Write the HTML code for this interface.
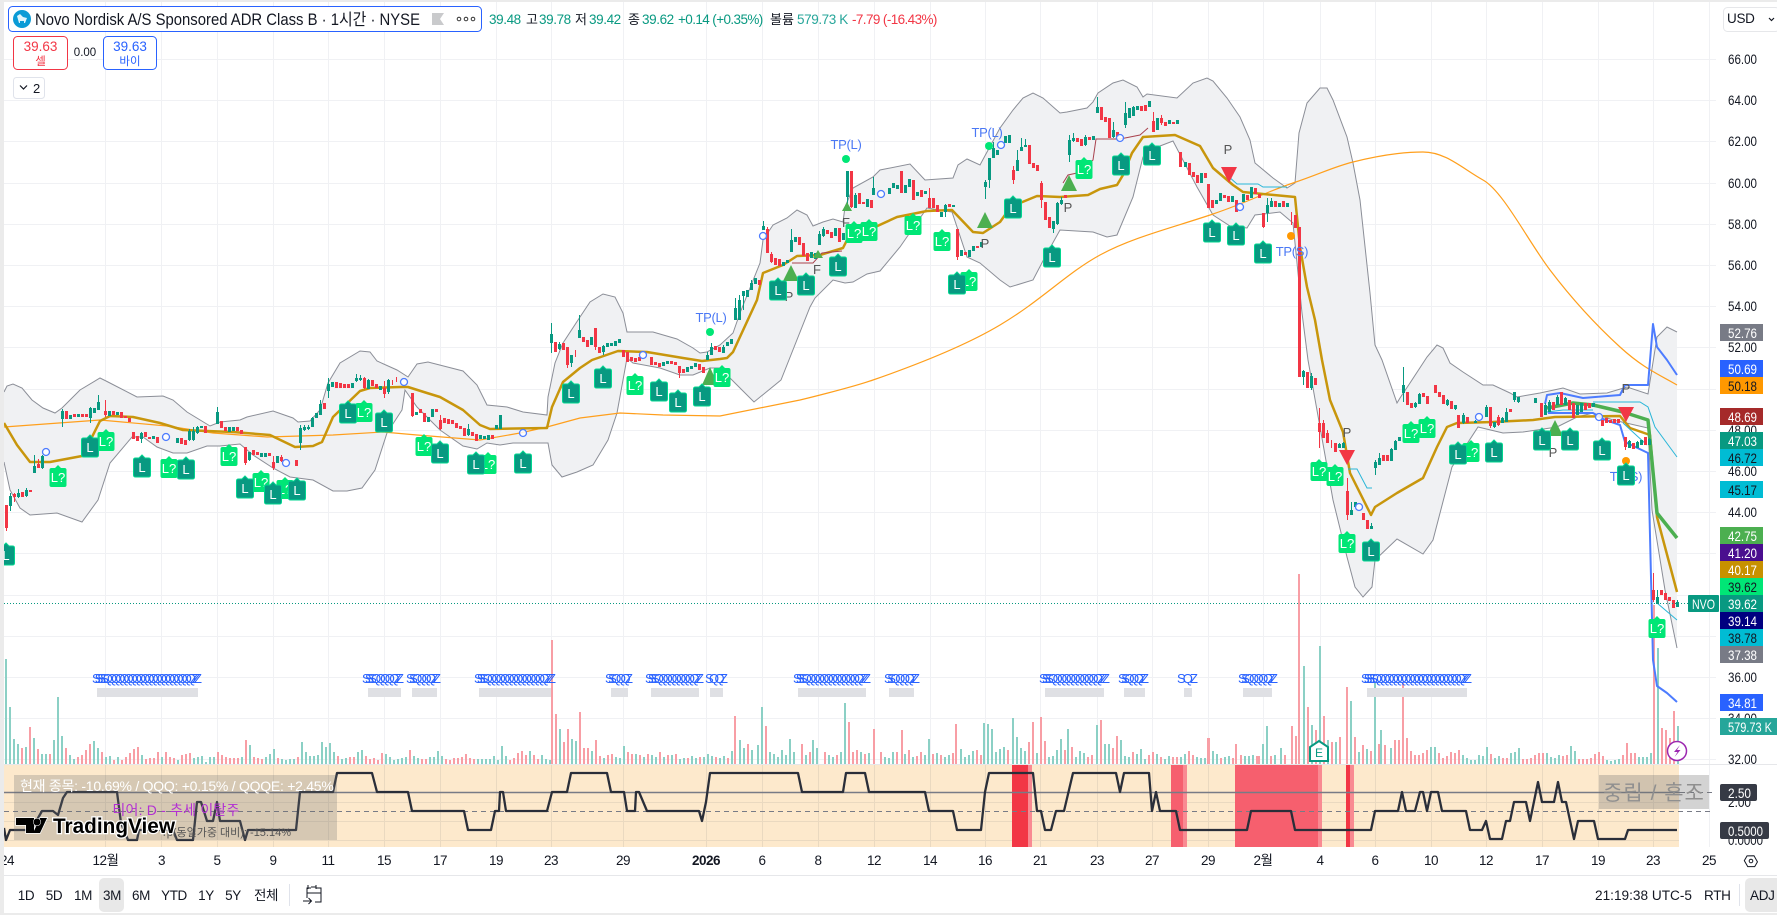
<!DOCTYPE html>
<html lang="ko"><head><meta charset="utf-8"><title>NVO</title>
<style>
html,body{margin:0;padding:0;background:#fff;width:1777px;height:915px;overflow:hidden}
svg{display:block}
text{font-family:"Liberation Sans","Noto Sans CJK KR",sans-serif;font-size:13px;fill:#131722}
.ax{font-size:14px;fill:#131722}
.tm{font-size:13.500px;text-anchor:middle;letter-spacing:-.5px}
.lb{font-size:14px;text-anchor:middle}
.w{fill:#fff}
.g{fill:#089981}
.r{fill:#f23645}
.m{font-size:13px;fill:#fff;text-anchor:middle}
.tp{font-size:13px;fill:#4a78f5;text-anchor:middle;letter-spacing:-.3px}
.pf{font-size:13px;fill:#555;text-anchor:middle}
.sq{font-size:13px;fill:#2962ff}
.bt{font-size:13.500px;text-anchor:middle;letter-spacing:-.4px}
</style></head><body>
<svg width="1777" height="915" viewBox="0 0 1777 915" xmlns="http://www.w3.org/2000/svg">
<defs>
<path id="t" d="M-8.5 5Q-8.5 3-6.500 3H-3L0 0L3 3H6.500Q8.500 3 8.500 5V20Q8.500 22 6.500 22H-6.500Q-8.500 22-8.500 20Z"/>
<clipPath id="pc"><rect x="4" y="2" width="1712" height="762"/></clipPath>
</defs>
<rect width="1777" height="915" fill="#fff"/>

<!-- grid -->
<path stroke="#f0f1f4" stroke-width="1" fill="none" d="M4 59.500H1716M4 100.500H1716M4 141.500H1716M4 183.500H1716M4 224.500H1716M4 265.500H1716M4 306.500H1716M4 347.500H1716M4 389.500H1716M4 430.500H1716M4 471.500H1716M4 512.500H1716M4 553.500H1716M4 595.500H1716M4 636.500H1716M4 677.500H1716M4 718.500H1716M4 759.500H1716M105.500 2V847M161.500 2V847M217.500 2V847M273.500 2V847M328.500 2V847M384.500 2V847M440.500 2V847M496.500 2V847M551.500 2V847M623.500 2V847M706.500 2V847M762.500 2V847M818.500 2V847M874.500 2V847M930.500 2V847M985.500 2V847M1040.500 2V847M1097.500 2V847M1152.500 2V847M1208.500 2V847M1263.500 2V847M1320.500 2V847M1375.500 2V847M1431.500 2V847M1486.500 2V847M1542.500 2V847M1598.500 2V847M1653.500 2V847M1709.500 2V847"/>

<!-- volume -->
<g fill="none" stroke-width="2">
<path stroke="#8bd0c5" d="M6 659V764M10 707V764M14 739V764M18 744V764M26 747V764M34 738V764M42 754V764M46 754V764M54 740V764M58 697V764M62 736V764M70 755V764M74 759V764M94 741V764M98 748V764M106 757V764M110 756V764M118 757V764M142 755V764M162 757V764M178 760V764M194 758V764M198 757V764M202 756V764M206 762V764M210 757V764M214 757V764M242 757V764M250 745V764M266 757V764M270 754V764M274 749V764M282 759V764M286 760V764M290 759V764M294 759V764M302 742V764M306 752V764M310 756V764M314 756V764M318 755V764M322 742V764M326 747V764M330 743V764M334 752V764M342 759V764M346 758V764M358 752V764M362 750V764M386 754V764M390 757V764M394 760V764M398 759V764M402 758V764M406 757V764M414 756V764M418 758V764M430 757V764M434 757V764M438 751V764M442 756V764M478 759V764M482 759V764M486 759V764M490 759V764M494 756V764M498 760V764M502 746V764M506 756V764M530 751V764M542 755V764M546 759V764M550 760V764M560 729V764M572 739V764M576 741V764M592 751V764M604 758V764M616 757V764M620 758V764M624 746V764M636 754V764M644 757V764M652 755V764M656 757V764M664 757V764M672 755V764M680 759V764M684 758V764M692 756V764M696 758V764M704 757V764M708 754V764M712 756V764M720 758V764M724 756V764M732 751V764M740 740V764M744 748V764M752 750V764M758 745V764M762 707V764M770 752V764M774 754V764M778 757V764M782 750V764M786 755V764M790 739V764M794 752V764M806 755V764M813 740V764M817 748V764M829 755V764M833 757V764M841 752V764M845 703V764M861 752V764M869 753V764M885 757V764M889 758V764M893 752V764M905 754V764M913 757V764M925 755V764M929 739V764M937 753V764M945 757V764M949 755V764M961 749V764M965 757V764M969 755V764M973 751V764M984 723V764M988 724V764M992 729V764M996 752V764M1000 749V764M1004 747V764M1013 718V764M1017 737V764M1021 748V764M1025 751V764M1037 753V764M1049 757V764M1053 756V764M1057 750V764M1061 739V764M1068 729V764M1076 757V764M1080 751V764M1084 753V764M1097 725V764M1105 744V764M1109 744V764M1121 740V764M1125 756V764M1129 757V764M1137 754V764M1141 749V764M1145 759V764M1157 754V764M1165 759V764M1169 756V764M1181 757V764M1185 754V764M1197 757V764M1201 758V764M1205 758V764M1213 751V764M1217 754V764M1225 757V764M1229 756V764M1245 756V764M1249 756V764M1253 755V764M1263 744V764M1267 726V764M1275 755V764M1281 748V764M1304 666V764M1312 725V764M1320 646V764M1328 740V764M1336 742V764M1351 701V764M1359 752V764M1367 749V764M1375 683V764M1381 730V764M1391 748V764M1431 747V764M1435 747V764M1463 755V764M1467 758V764M1471 760V764M1475 760V764M1479 755V764M1483 756V764M1487 747V764M1495 758V764M1499 756V764M1511 753V764M1515 752V764M1519 748V764M1547 753V764M1551 757V764M1555 758V764M1559 755V764M1571 746V764M1575 751V764M1607 760V764M1611 761V764M1615 760V764M1619 759V764M1639 757V764M1643 757V764M1647 757V764M1651 753V764M1658 648V764M1678 726V764"/>
<path stroke="#f89ea5" d="M22 748V764M30 727V764M38 749V764M50 754V764M66 748V764M78 757V764M82 755V764M86 750V764M90 744V764M102 752V764M114 760V764M122 760V764M126 757V764M130 753V764M134 749V764M138 747V764M146 759V764M150 758V764M154 758V764M158 752V764M166 752V764M170 757V764M174 758V764M182 755V764M186 754V764M190 753V764M218 752V764M222 755V764M226 757V764M230 758V764M234 758V764M238 758V764M246 740V764M254 757V764M258 758V764M262 759V764M278 758V764M298 757V764M338 756V764M350 757V764M354 757V764M366 756V764M370 759V764M374 758V764M378 760V764M382 753V764M410 750V764M422 759V764M426 759V764M446 759V764M450 760V764M454 758V764M458 758V764M462 757V764M466 754V764M470 758V764M474 759V764M510 760V764M514 758V764M518 753V764M522 751V764M526 755V764M534 755V764M538 759V764M552 640V764M556 714V764M564 742V764M568 729V764M580 712V764M584 748V764M588 748V764M596 740V764M600 756V764M608 755V764M612 754V764M628 752V764M632 754V764M640 755V764M648 754V764M660 752V764M668 755V764M676 754V764M688 758V764M700 757V764M716 757V764M728 758V764M735 716V764M748 744V764M766 726V764M802 744V764M810 752V764M825 752V764M837 755V764M849 722V764M853 752V764M857 750V764M865 754V764M874 729V764M881 752V764M897 752V764M902 730V764M909 750V764M917 756V764M921 752V764M933 754V764M941 755V764M953 753V764M956 724V764M977 750V764M981 755V764M1008 750V764M1029 742V764M1033 722V764M1041 717V764M1045 741V764M1065 750V764M1072 747V764M1088 757V764M1092 755V764M1101 720V764M1113 748V764M1117 736V764M1133 752V764M1149 755V764M1153 752V764M1161 757V764M1173 757V764M1177 757V764M1189 751V764M1193 755V764M1208 738V764M1209 738V764M1221 758V764M1233 758V764M1236 744V764M1241 755V764M1257 756V764M1259 756V764M1271 756V764M1285 755V764M1292 726V764M1296 736V764M1299 574V764M1308 707V764M1316 730V764M1324 716V764M1332 742V764M1340 737V764M1347 687V764M1355 737V764M1363 745V764M1371 751V764M1379 744V764M1385 745V764M1395 740V764M1399 740V764M1403 683V764M1407 738V764M1411 751V764M1415 755V764M1419 755V764M1423 753V764M1427 750V764M1439 753V764M1443 758V764M1447 756V764M1451 752V764M1455 753V764M1459 750V764M1491 754V764M1503 758V764M1507 758V764M1523 759V764M1527 759V764M1531 758V764M1535 755V764M1539 753V764M1543 753V764M1563 756V764M1567 755V764M1579 759V764M1583 759V764M1587 759V764M1591 758V764M1595 754V764M1599 752V764M1603 756V764M1623 755V764M1627 743V764M1631 753V764M1635 753V764M1654 605V764M1662 728V764M1666 730V764M1670 738V764M1674 711V764"/>
</g>

<!-- bollinger -->
<path fill="#f0f1f3" d="M4 392 7 386 13 384 22 388 32 400 43 408 55 413 62 408 80 390 100 378 108 382 137 397 163 396 173 400 187 412 210 426 220 422 240 420 247 417 273 411 293 418 298 422 310 421 320 410 328 383 340 363 360 351 370 352 377 361 397 370 408 377 417 364 428 362 463 371 477 385 487 405 507 407 523 412 547 415 548 397 555 363 563 343 580 317 590 302 603 294 615 297 623 313 627 332 653 332 677 339 693 348 700 353 707 352 720 345 733 333 740 313 760 263 763 240 773 225 787 218 797 210 807 215 813 226 823 222 833 219 843 222 845 207 853 188 873 177 880 170 910 164 925 180 953 178 958 165 967 159 980 165 1000 128 1013 110 1023 98 1033 93 1043 98 1060 113 1067 112 1087 108 1093 102 1098 93 1113 83 1123 80 1137 87 1143 97 1147 94 1177 98 1193 83 1207 78 1213 81 1227 98 1240 117 1250 140 1255 163 1273 178 1287 188 1295 183 1299 133 1307 103 1320 88 1327 88 1333 100 1347 137 1353 163 1360 200 1370 293 1375 345 1382 360 1397 403 1400 398 1410 383 1427 357 1437 345 1443 348 1450 363 1463 372 1483 385 1493 385 1510 393 1517 397 1540 393 1563 388 1580 394 1607 393 1627 387 1648 394 1657 337 1667 327 1677 332V648L1665 590 1652 510 1648 428 1613 420 1593 413 1577 417 1557 427 1523 432 1503 433 1478 427 1452 467 1433 540 1423 554 1397 539 1375 560 1372 587 1363 597 1355 587 1347 557 1333 500 1320 427 1308 360 1302 313 1293 223 1280 212 1255 215 1247 228 1230 226 1213 215 1197 187 1173 141 1160 146 1143 157 1133 197 1117 235 1107 237 1093 232 1060 230 1045 257 1033 280 1010 287 1000 280 980 263 967 257 952 212 927 208 900 247 880 271 867 274 853 282 845 283 833 280 815 298 810 307 781 380 754 402 737 385 720 368 710 368 693 375 680 375 660 368 633 363 627 358 617 413 608 440 593 465 577 472 562 477 552 465 548 443 513 443 500 445 487 443 477 449 463 446 440 430 417 407 405 390 402 410 387 433 375 470 362 488 347 491 333 491 313 480 290 477 273 468 253 455 240 444 220 446 207 446 187 453 173 453 157 447 143 437 132 437 110 463 98 500 82 522 57 513 30 515 20 508 10 490 4 462Z"/>
<g fill="none" stroke="#8b8e97" stroke-width="1">
<path d="M4 392 7 386 13 384 22 388 32 400 43 408 55 413 62 408 80 390 100 378 108 382 137 397 163 396 173 400 187 412 210 426 220 422 240 420 247 417 273 411 293 418 298 422 310 421 320 410 328 383 340 363 360 351 370 352 377 361 397 370 408 377 417 364 428 362 463 371 477 385 487 405 507 407 523 412 547 415 548 397 555 363 563 343 580 317 590 302 603 294 615 297 623 313 627 332 653 332 677 339 693 348 700 353 707 352 720 345 733 333 740 313 760 263 763 240 773 225 787 218 797 210 807 215 813 226 823 222 833 219 843 222 845 207 853 188 873 177 880 170 910 164 925 180 953 178 958 165 967 159 980 165 1000 128 1013 110 1023 98 1033 93 1043 98 1060 113 1067 112 1087 108 1093 102 1098 93 1113 83 1123 80 1137 87 1143 97 1147 94 1177 98 1193 83 1207 78 1213 81 1227 98 1240 117 1250 140 1255 163 1273 178 1287 188 1295 183 1299 133 1307 103 1320 88 1327 88 1333 100 1347 137 1353 163 1360 200 1370 293 1375 345 1382 360 1397 403 1400 398 1410 383 1427 357 1437 345 1443 348 1450 363 1463 372 1483 385 1493 385 1510 393 1517 397 1540 393 1563 388 1580 394 1607 393 1627 387 1648 394 1657 337 1667 327 1677 332"/>
<path d="M1677 648 1665 590 1652 510 1648 428 1613 420 1593 413 1577 417 1557 427 1523 432 1503 433 1478 427 1452 467 1433 540 1423 554 1397 539 1375 560 1372 587 1363 597 1355 587 1347 557 1333 500 1320 427 1308 360 1302 313 1293 223 1280 212 1255 215 1247 228 1230 226 1213 215 1197 187 1173 141 1160 146 1143 157 1133 197 1117 235 1107 237 1093 232 1060 230 1045 257 1033 280 1010 287 1000 280 980 263 967 257 952 212 927 208 900 247 880 271 867 274 853 282 845 283 833 280 815 298 810 307 781 380 754 402 737 385 720 368 710 368 693 375 680 375 660 368 633 363 627 358 617 413 608 440 593 465 577 472 562 477 552 465 548 443 513 443 500 445 487 443 477 449 463 446 440 430 417 407 405 390 402 410 387 433 375 470 362 488 347 491 333 491 313 480 290 477 273 468 253 455 240 444 220 446 207 446 187 453 173 453 157 447 143 437 132 437 110 463 98 500 82 522 57 513 30 515 20 508 10 490 4 462"/>
</g>

<!-- thin orange SMA -->
<path fill="none" stroke="#ff9f1c" stroke-width="1.200" d="M4 427 100 420 167 426 213 433 267 437 333 435 383 432 417 435 480 440 520 433 547 427 580 418 620 413 663 415 720 416 800 400S850 388 873 380S958 350 1000 325S1067 273 1100 255S1175 227 1213 214S1266 192 1293 183S1333 167 1353 162S1400 152 1423 152S1463 169 1483 180S1528 241 1550 270S1597 326 1620 347S1658 374 1677 385"/>

<!-- gold MA -->
<path fill="none" stroke="#c8960c" stroke-width="2.500" stroke-linejoin="round" d="M4 423 17 445 30 462 50 462 82 456 92 437 100 421 110 416 133 417 160 423 183 430 207 431 233 432 270 435 295 447 313 446 322 442 333 417 360 391 370 388 400 387 408 387 427 393 440 397 463 410 480 425 490 429 547 428 552 407 563 382 580 368 592 360 618 351 647 352 683 358 702 361 720 359 727 358 733 352 757 300 763 273 783 265 797 256 820 255 843 248 847 240 873 228 897 217 927 211 952 210 973 232 983 233 1000 222 1005 215 1020 203 1037 196 1060 197 1088 195 1100 189 1117 185 1123 175 1132 153 1143 137 1175 135 1200 146 1213 168 1233 185 1243 192 1263 194 1295 197 1300 247 1307 287 1315 320 1322 360 1330 400 1343 432 1350 473 1371 515 1375 507 1397 493 1423 478 1437 447 1447 427 1457 423 1493 422 1533 420 1555 417 1620 416 1630 428 1650 435 1657 517 1677 592"/>

<!-- thin indicator lines -->
<g fill="none" stroke-width="1">
<path stroke="#a9424e" d="M792 263H813L822 253 842 251M1063 183 1068 175 1077 173 1093 160 1096 139H1120L1140 135 1148 128"/>
<path stroke="#29b6d8" d="M1228 176 1237 184H1258L1263 187H1287M1348 469H1357L1367 488H1372M1547 412 1563 410 1593 410M1593 402H1640L1648 407 1655 427 1677 457M1623 423 1647 445M1657 603 1677 620"/>
</g>
<path fill="none" stroke="#4caf50" stroke-width="3.500" stroke-linejoin="round" d="M1547 408 1573 403 1593 405 1623 412 1648 420 1657 513 1677 538"/>
<path fill="none" stroke="#4d7cff" stroke-width="2" stroke-linejoin="round" d="M1545 404 1547 395 1560 393 1583 398 1620 395 1625 385 1648 385 1653 324 1657 347 1667 360 1677 375M1548 413 1593 413 1603 419 1620 425 1625 442 1648 453 1653 660 1657 686 1667 693 1677 702"/>

<!-- candles: wicks -->
<g fill="none" clip-path="url(#pc)">
<path stroke="#089981" stroke-width="1" d="M10.500 493V511M18.500 489V498M26.500 488V497M34.500 455V473M42.500 455V469M62.500 409V427M90.500 407V423M98.500 395V410M141.500 432V443M189.500 429V441M193.500 427V441M197.500 426V434M217.500 407V424M249.500 452V461M300.500 425V450M304.500 425V431M308.500 425V430M312.500 417V427M320.500 400V415M328.500 378V398M356.500 374V382M360.500 375V381M368.500 379V389M388.500 379V394M468.500 424V436M551.500 323V353M559.500 342V350M571.500 355V367M579.500 315V338M603.500 345V355M707.500 352V360M711.500 343V355M723.500 345V353M735.500 298V320M739.500 295V320M743.500 291V310M751.500 280V290M763.500 221V230M791.500 229V252M819.500 231V245M823.500 227V237M847.500 171V205M855.500 193V208M873.500 177V195M945.500 204V217M985.500 180V199M989.500 158V188M993.500 142V158M1017.500 150V171M1021.500 138V151M1025.500 139V147M1053.500 221V233M1057.500 202V225M1061.500 197V205M1069.500 135V162M1073.500 133V142M1085.500 135V146M1097.500 97V113M1113.500 122V138M1125.500 102V128M1133.500 106V116M1267.500 198V222M1271.500 198V207M1303.500 370V385M1311.500 373V390M1339.500 443V448M1343.500 442V448M1351.500 502V515M1371.500 523V529M1375.500 460V475M1379.500 453V465M1391.500 448V461M1395.500 440V450M1403.500 367V402M1415.500 402V408M1419.500 393V404M1447.500 399V406M1455.500 405V410M1463.500 413V424M1475.500 420V423M1486.500 405V417M1494.500 422V428M1502.500 417V423M1506.500 408V422M1514.500 392V402M1518.500 397V403M1545.500 403V415M1549.500 400V412M1557.500 395V405M1565.500 397V405M1577.500 405V415M1581.500 403V412M1629.500 440V448M1637.500 441V448M1641.500 440V445M1649.500 438V445M1657.500 590V604M1677.500 600V607"/>
<path stroke="#f23645" stroke-width="1" d="M6.500 505V531M14.500 493V502M22.500 492V497M38.500 459V468M105.500 400V417M245.500 447V465M273.500 456V470M281.500 455V462M364.500 377V389M384.500 381V398M392.500 380V385M396.500 377V382M412.500 393V417M440.500 415V430M567.500 347V368M575.500 350V357M595.500 328V350M679.500 366V378M767.500 227V253M771.500 252V263M851.500 171V208M901.500 171V193M913.500 180V200M929.500 188V208M957.500 229V260M1013.500 166V184M1029.500 145V164M1041.500 181V208M1153.500 112V132M1161.500 115V125M1291.500 212V225M1263.500 213V228M1319.500 408V448M1323.500 420V438M1327.500 430V443M1331.500 440V448M1347.500 478V520M1490.500 407V428M1498.500 415V426M1625.500 437V450M1653.500 573V602"/>
<!-- candles: bodies -->
<path stroke="#089981" stroke-width="3" d="M10.500 496V506M18.500 493V497M26.500 490V496M34.500 466V473M42.500 456V468M62.500 411V419M70.500 415V419M78.500 414V417M90.500 408V418M94.500 408V413M98.500 402V410M109.500 411V416M117.500 412V415M141.500 433V439M153.500 436V439M177.500 438V443M189.500 431V440M193.500 431V440M197.500 427V433M201.500 426V428M217.500 412V424M229.500 427V432M233.500 427V431M249.500 452V460M261.500 453V457M265.500 453V457M277.500 456V463M300.500 428V443M304.500 427V430M308.500 427V429M312.500 418V427M316.500 413V418M320.500 404V415M328.500 384V391M332.500 382V387M352.500 383V388M356.500 378V381M360.500 378V380M368.500 380V389M380.500 386V390M388.500 380V392M416.500 412V415M428.500 417V422M432.500 409V417M468.500 429V435M480.500 435V439M484.500 436V439M488.500 435V440M496.500 425V429M500.500 415V429M551.500 334V343M559.500 344V349M571.500 355V363M579.500 330V338M591.500 337V345M603.500 346V352M607.500 343V347M611.500 343V346M615.500 341V346M619.500 339V343M663.500 362V366M667.500 361V364M687.500 367V372M691.500 366V369M695.500 363V367M707.500 355V360M711.500 347V355M723.500 347V353M727.500 342V346M731.500 339V344M735.500 308V320M739.500 300V320M743.500 291V296M747.500 290V297M751.500 283V290M755.500 278V284M763.500 226V230M783.500 262V266M787.500 260V263M791.500 240V252M795.500 237V242M811.500 252V258M815.500 253V259M819.500 234V245M823.500 229V236M835.500 228V236M843.500 233V240M847.500 171V197M855.500 195V208M867.500 199V207M873.500 188V195M889.500 188V194M893.500 183V188M897.500 185V189M905.500 185V193M909.500 179V187M917.500 192V196M925.500 191V194M941.500 212V217M945.500 205V212M953.500 205V207M961.500 250V256M969.500 250V257M973.500 246V251M981.500 242V247M985.500 182V187M989.500 158V180M993.500 148V158M997.500 150V155M1005.500 136V143M1009.500 135V143M1017.500 160V171M1021.500 147V151M1025.500 145V147M1053.500 221V229M1057.500 203V224M1061.500 200V204M1069.500 140V155M1073.500 138V141M1085.500 137V145M1093.500 136V140M1097.500 107V113M1113.500 130V137M1125.500 113V125M1129.500 108V118M1133.500 107V116M1137.500 106V110M1149.500 101V107M1157.500 118V130M1169.500 120V124M1177.500 120V124M1185.500 162V167M1201.500 173V183M1216.500 200V204M1220.500 193V201M1232.500 196V202M1243.500 194V202M1251.500 187V198M1267.500 205V213M1271.500 201V207M1279.500 203V207M1287.500 203V207M1303.500 371V377M1311.500 376V388M1339.500 444V448M1343.500 443V448M1351.500 510V515M1355.500 502V507M1371.500 526V529M1375.500 462V468M1379.500 458V465M1391.500 449V461M1395.500 441V450M1399.500 437V441M1403.500 385V393M1415.500 403V407M1419.500 394V404M1447.500 400V405M1455.500 405V409M1463.500 415V423M1475.500 421V423M1486.500 407V417M1494.500 422V427M1502.500 418V423M1506.500 412V422M1514.500 392V400M1518.500 397V402M1535.500 398V403M1545.500 405V415M1549.500 402V412M1557.500 397V405M1565.500 398V405M1577.500 405V415M1581.500 403V412M1593.500 403V407M1629.500 441V448M1637.500 442V448M1641.500 440V445M1649.500 439V445M1657.500 597V604M1677.500 602V607"/>
<path stroke="#f23645" stroke-width="3" d="M6.500 505V528M14.500 494V497M22.500 492V497M30.500 490V492M38.500 464V468M66.500 411V419M74.500 414V417M82.500 414V417M86.500 414V417M105.500 411V415M113.500 411V415M121.500 412V418M125.500 416V418M129.500 418V422M133.500 432V439M137.500 436V441M145.500 432V437M149.500 437V439M157.500 437V443M181.500 438V444M185.500 440V445M205.500 426V433M221.500 421V428M225.500 427V431M237.500 427V431M241.500 430V434M245.500 447V463M253.500 450V455M257.500 452V455M269.500 453V456M273.500 462V468M281.500 457V461M296.500 460V466M324.500 403V409M336.500 382V388M340.500 383V388M344.500 384V388M348.500 384V388M364.500 378V388M372.500 380V386M376.500 384V388M384.500 388V394M412.500 393V416M420.500 409V413M424.500 413V422M436.500 409V412M440.500 420V429M444.500 418V423M448.500 419V424M452.500 420V424M456.500 423V428M460.500 426V429M464.500 428V436M472.500 432V436M476.500 434V441M492.500 435V439M555.500 342V352M563.500 343V350M567.500 347V365M583.500 337V342M587.500 340V347M595.500 328V347M599.500 347V353M623.500 350V357M627.500 352V362M631.500 357V361M635.500 358V362M639.500 357V361M651.500 357V365M655.500 362V365M659.500 363V367M671.500 361V364M675.500 362V365M679.500 366V373M683.500 369V373M699.500 364V370M703.500 367V373M715.500 346V350M719.500 347V352M759.500 280V285M767.500 229V253M771.500 254V262M775.500 258V265M779.500 259V266M799.500 237V245M803.500 243V256M807.500 253V261M827.500 230V234M831.500 232V238M839.500 228V242M851.500 171V207M859.500 193V204M863.500 202V204M871.500 200V208M901.500 171V193M913.500 180V200M921.500 190V197M929.500 198V208M933.500 198V208M937.500 205V212M949.500 204V207M957.500 229V257M965.500 252V255M977.500 246V248M1013.500 170V180M1029.500 145V164M1033.500 163V168M1037.500 165V171M1041.500 183V200M1045.500 202V220M1049.500 217V228M1065.500 195V198M1077.500 138V142M1081.500 139V146M1089.500 137V140M1101.500 107V120M1105.500 117V122M1109.500 118V138M1117.500 132V137M1141.500 106V111M1145.500 105V111M1153.500 121V132M1161.500 118V123M1165.500 122V126M1173.500 122V124M1180.500 152V167M1189.500 163V175M1193.500 172V177M1197.500 175V183M1205.500 173V178M1208.500 184V208M1212.500 200V208M1224.500 195V198M1228.500 196V202M1236.500 200V212M1247.500 195V200M1255.500 188V194M1259.500 194V198M1263.500 213V227M1275.500 201V207M1283.500 201V207M1295.500 215V228M1299.500 227V377M1307.500 372V388M1315.500 378V385M1319.500 423V432M1323.500 423V438M1327.500 433V443M1335.500 443V452M1347.500 491V515M1363.500 513V520M1367.500 520V529M1383.500 455V461M1387.500 455V461M1407.500 392V405M1411.500 403V408M1423.500 393V397M1427.500 396V404M1435.500 385V393M1439.500 392V397M1443.500 395V404M1451.500 401V409M1458.500 415V428M1467.500 417V423M1490.500 407V426M1498.500 417V425M1510.500 409V412M1541.500 403V417M1553.500 402V410M1561.500 392V405M1569.500 400V410M1573.500 403V418M1585.500 403V410M1589.500 403V408M1602.500 420V426M1606.500 418V423M1610.500 420V423M1614.500 419V423M1618.500 419V423M1625.500 437V447M1633.500 443V449M1645.500 437V445M1653.500 590V600M1661.500 590V595M1665.500 593V600M1669.500 597V601M1673.500 600V608"/>
</g>

<!-- blue hollow circles -->
<g fill="#fff" fill-opacity=".85" stroke="#4d7cff" stroke-width="1.300">
<circle cx="46" cy="452" r="3.500"/><circle cx="166" cy="437" r="3.500"/><circle cx="286" cy="463" r="3.500"/><circle cx="404" cy="382" r="3.500"/><circle cx="523" cy="433" r="3.500"/><circle cx="643" cy="355" r="3.500"/><circle cx="763" cy="236" r="3.500"/><circle cx="881" cy="194" r="3.500"/><circle cx="1001" cy="145" r="3.500"/><circle cx="1120" cy="138" r="3.500"/><circle cx="1240" cy="207" r="3.500"/><circle cx="1359" cy="507" r="3.500"/><circle cx="1479" cy="417" r="3.500"/><circle cx="1599" cy="417" r="3.500"/>
</g>

<!-- triangles -->
<g fill="#4caf50"><path d="M847 202 852 211H842ZM818 250 823 258H813ZM791 265 799 281H783ZM985 212 993 228H977ZM710 367 718 385H702ZM1069 175 1077 191H1061ZM1555 420 1563 436H1547Z"/></g>
<g fill="#f23645"><path d="M1229 183 1221 167H1237ZM1347 465 1339 450H1355ZM1626 422 1618 407H1634Z"/></g>

<!-- TP dots -->
<circle cx="710" cy="332" r="4" fill="#00e676"/><circle cx="846" cy="159" r="4" fill="#00e676"/><circle cx="989" cy="146" r="4" fill="#00e676"/><circle cx="1291" cy="236" r="4" fill="#ff9800"/><circle cx="1626" cy="461" r="4" fill="#ff9800"/>
<text class="tp" x="711" y="322">TP(L)</text><text class="tp" x="846" y="149">TP(L)</text><text class="tp" x="987" y="137">TP(L)</text><text class="tp" x="1292" y="256">TP(S)</text><text class="tp" x="1626" y="481">TP(S)</text>

<!-- P / F -->
<text class="pf" x="789" y="301">P</text><text class="pf" x="985" y="248">P</text><text class="pf" x="846" y="227">F</text><text class="pf" x="817" y="274">F</text><text class="pf" x="1068" y="212">P</text><text class="pf" x="1228" y="154">P</text><text class="pf" x="1347" y="437">P</text><text class="pf" x="1553" y="457">P</text><text class="pf" x="1626" y="393">P</text>

<!-- L? tags -->
<g fill="#00e676" clip-path="url(#pc)">
<use href="#t" x="58" y="465"/><use href="#t" x="106" y="429"/><use href="#t" x="169" y="456"/><use href="#t" x="229" y="444"/><use href="#t" x="261" y="470"/><use href="#t" x="285" y="477"/><use href="#t" x="364" y="400"/><use href="#t" x="424" y="434"/><use href="#t" x="488" y="452"/><use href="#t" x="635" y="373"/><use href="#t" x="722" y="365"/><use href="#t" x="854" y="221"/><use href="#t" x="869" y="219"/><use href="#t" x="913" y="213"/><use href="#t" x="942" y="229"/><use href="#t" x="969" y="269"/><use href="#t" x="1084" y="157"/><use href="#t" x="1319" y="459"/><use href="#t" x="1335" y="464"/><use href="#t" x="1347" y="531"/><use href="#t" x="1411" y="421"/><use href="#t" x="1427" y="416"/><use href="#t" x="1471" y="440"/><use href="#t" x="1657" y="616"/>
</g>
<text class="m" x="58" y="482">L?</text><text class="m" x="106" y="446">L?</text><text class="m" x="169" y="473">L?</text><text class="m" x="229" y="461">L?</text><text class="m" x="261" y="487">L?</text><text class="m" x="285" y="494">L?</text><text class="m" x="364" y="417">L?</text><text class="m" x="424" y="451">L?</text><text class="m" x="488" y="469">L?</text><text class="m" x="635" y="390">L?</text><text class="m" x="722" y="382">L?</text><text class="m" x="854" y="238">L?</text><text class="m" x="869" y="236">L?</text><text class="m" x="913" y="230">L?</text><text class="m" x="942" y="246">L?</text><text class="m" x="969" y="286">L?</text><text class="m" x="1084" y="174">L?</text><text class="m" x="1319" y="476">L?</text><text class="m" x="1335" y="481">L?</text><text class="m" x="1347" y="548">L?</text><text class="m" x="1411" y="438">L?</text><text class="m" x="1427" y="433">L?</text><text class="m" x="1471" y="457">L?</text><text class="m" x="1657" y="633">L?</text>

<!-- L tags -->
<g fill="#089981" stroke="#00d68f" stroke-width="1" clip-path="url(#pc)">
<use href="#t" x="6" y="543"/><use href="#t" x="90" y="435"/><use href="#t" x="142" y="455"/><use href="#t" x="186" y="457"/><use href="#t" x="245" y="476"/><use href="#t" x="273" y="482"/><use href="#t" x="297" y="478"/><use href="#t" x="348" y="401"/><use href="#t" x="384" y="410"/><use href="#t" x="440" y="441"/><use href="#t" x="476" y="452"/><use href="#t" x="523" y="451"/><use href="#t" x="571" y="381"/><use href="#t" x="603" y="366"/><use href="#t" x="659" y="379"/><use href="#t" x="678" y="390"/><use href="#t" x="702" y="384"/><use href="#t" x="778" y="278"/><use href="#t" x="806" y="273"/><use href="#t" x="838" y="254"/><use href="#t" x="957" y="272"/><use href="#t" x="1013" y="196"/><use href="#t" x="1052" y="245"/><use href="#t" x="1121" y="153"/><use href="#t" x="1152" y="143"/><use href="#t" x="1212" y="220"/><use href="#t" x="1236" y="223"/><use href="#t" x="1263" y="241"/><use href="#t" x="1371" y="539"/><use href="#t" x="1458" y="442"/><use href="#t" x="1494" y="440"/><use href="#t" x="1542" y="428"/><use href="#t" x="1570" y="428"/><use href="#t" x="1602" y="438"/><use href="#t" x="1626" y="463"/>
</g>
<text class="m" x="6" y="560">L</text><text class="m" x="90" y="452">L</text><text class="m" x="142" y="472">L</text><text class="m" x="186" y="474">L</text><text class="m" x="245" y="493">L</text><text class="m" x="273" y="499">L</text><text class="m" x="297" y="495">L</text><text class="m" x="348" y="418">L</text><text class="m" x="384" y="427">L</text><text class="m" x="440" y="458">L</text><text class="m" x="476" y="469">L</text><text class="m" x="523" y="468">L</text><text class="m" x="571" y="398">L</text><text class="m" x="603" y="383">L</text><text class="m" x="659" y="396">L</text><text class="m" x="678" y="407">L</text><text class="m" x="702" y="401">L</text><text class="m" x="778" y="295">L</text><text class="m" x="806" y="290">L</text><text class="m" x="838" y="271">L</text><text class="m" x="957" y="289">L</text><text class="m" x="1013" y="213">L</text><text class="m" x="1052" y="262">L</text><text class="m" x="1121" y="170">L</text><text class="m" x="1152" y="160">L</text><text class="m" x="1212" y="237">L</text><text class="m" x="1236" y="240">L</text><text class="m" x="1263" y="258">L</text><text class="m" x="1371" y="556">L</text><text class="m" x="1458" y="459">L</text><text class="m" x="1494" y="457">L</text><text class="m" x="1542" y="445">L</text><text class="m" x="1570" y="445">L</text><text class="m" x="1602" y="455">L</text><text class="m" x="1626" y="480">L</text>

<!-- dotted price line -->
<path stroke="#089981" stroke-width="1" stroke-dasharray="1 2" d="M4 603.500H1688"/>

<!-- SQZ -->
<g>
<text class="sq" x="92" y="683" textLength="110" lengthAdjust="spacing">SSSSQQQQQQQQQQQQQQQQQQQQQZZZ</text>
<text class="sq" x="362" y="683" textLength="42" lengthAdjust="spacing">SSSQQQQQZZ</text>
<text class="sq" x="406" y="683" textLength="35" lengthAdjust="spacing">SSQQQQZZ</text>
<text class="sq" x="474" y="683" textLength="82" lengthAdjust="spacing">SSSQQQQQQQQQQQQQQZZZ</text>
<text class="sq" x="605" y="683" textLength="28" lengthAdjust="spacing">SSQQQZ</text>
<text class="sq" x="645" y="683" textLength="59" lengthAdjust="spacing">SSSQQQQQQQQQZZ</text>
<text class="sq" x="705" y="683" textLength="23" lengthAdjust="spacing">SQQZ</text>
<text class="sq" x="793" y="683" textLength="78" lengthAdjust="spacing">SSSQQQQQQQQQQQQQZZZ</text>
<text class="sq" x="884" y="683" textLength="36" lengthAdjust="spacing">SSQQQQZZ</text>
<text class="sq" x="1039" y="683" textLength="71" lengthAdjust="spacing">SSSQQQQQQQQQQQZZZ</text>
<text class="sq" x="1118" y="683" textLength="31" lengthAdjust="spacing">SSQQQZZ</text>
<text class="sq" x="1177" y="683" textLength="21">SQZ</text>
<text class="sq" x="1238" y="683" textLength="40" lengthAdjust="spacing">SSQQQQQZZ</text>
<text class="sq" x="1361" y="683" textLength="111" lengthAdjust="spacing">SSSSQQQQQQQQQQQQQQQQQQQQQZZZ</text>
</g>
<g fill="#dfe0e4"><rect x="97" y="688" width="101" height="9"/><rect x="368" y="688" width="33" height="9"/><rect x="412" y="688" width="25" height="9"/><rect x="479" y="688" width="72" height="9"/><rect x="611" y="688" width="17" height="9"/><rect x="651" y="688" width="48" height="9"/><rect x="710" y="688" width="13" height="9"/><rect x="798" y="688" width="68" height="9"/><rect x="889" y="688" width="25" height="9"/><rect x="1045" y="688" width="59" height="9"/><rect x="1124" y="688" width="21" height="9"/><rect x="1184" y="688" width="8" height="9"/><rect x="1243" y="688" width="29" height="9"/><rect x="1367" y="688" width="100" height="9"/></g>

<!-- E marker -->
<path d="M1319 741 1328 747V761H1310V747Z" fill="#fff" stroke="#089981" stroke-width="2"/><text x="1319" y="757" text-anchor="middle" style="font-size:12px;fill:#089981">E</text>
<!-- lightning -->
<circle cx="1677" cy="751" r="9.500" fill="#fff" stroke="#9c27b0" stroke-width="1.500"/>
<path d="M1680 745 1674 752H1677.500L1674.500 757 1680.500 750H1677Z" fill="#9c27b0"/>

<!-- lower pane -->
<path d="M0 764.500H1777" stroke="#e6e7ea" stroke-width="1"/>
<rect x="4" y="765" width="1675" height="82" fill="#fde9cc"/>
<path stroke="#ead9c0" stroke-width="1" fill="none" d="M105.500 765V847M161.500 765V847M217.500 765V847M273.500 765V847M328.500 765V847M384.500 765V847M440.500 765V847M496.500 765V847M551.500 765V847M623.500 765V847M706.500 765V847M762.500 765V847M818.500 765V847M874.500 765V847M930.500 765V847M985.500 765V847M1040.500 765V847M1097.500 765V847M1152.500 765V847M1208.500 765V847M1263.500 765V847M1320.500 765V847M1375.500 765V847M1431.500 765V847M1486.500 765V847M1542.500 765V847M1598.500 765V847M1653.500 765V847M4 802.500H1679M4 821.500H1679M4 840.500H1679"/>
<rect x="1012" y="765" width="16" height="82" fill="#f23645"/><rect x="1028" y="765" width="4" height="82" fill="#f98a92"/>
<rect x="1171" y="765" width="12" height="82" fill="#f65f6e"/><rect x="1183" y="765" width="4" height="82" fill="#f98a92"/>
<rect x="1235" y="765" width="83" height="82" fill="#f65f6e"/><rect x="1318" y="765" width="4" height="82" fill="#f98a92"/>
<rect x="1346" y="765" width="4" height="82" fill="#f23645"/><rect x="1350" y="765" width="4" height="82" fill="#f98a92"/>
<path d="M4 792.500H1680" stroke="#787b86" stroke-width="1.500"/>
<path d="M1680 792.500H1714M4 811.500H1714" stroke="#787b86" stroke-width="1" stroke-dasharray="5 4"/>

<!-- step line -->
<path fill="none" stroke="#2a2e39" stroke-width="2.300" stroke-linejoin="round" d="M4 828 6 840 10 830H34L38 818 42 811H53L58 815 63 798 67 792H117L121 823 128 840H137L139 830H173L177 840H193L197 802H201L207 821H213L217 802 220 821H240L245 840 248 830H296L300 792H333L337 773H372L377 792H408L412 811H464L468 830H491L495 811H499L500 792H503L506 811H547L552 792H567L571 773H607L611 792H624L627 811H635L636 792H639L647 811H699L702 821 706 802 710 773H798L802 792H843L846 773H865L869 792H925L929 811H953L957 830H981L985 792 989 773H1033L1037 811H1041L1045 830H1051L1056 811H1064L1073 773H1116L1120 792 1124 773H1149L1152 811 1156 792 1160 811H1176L1180 830H1247L1251 811H1291L1295 830H1371L1375 811H1398L1402 792 1406 811H1415L1420 792H1423L1427 811 1431 792H1438L1442 811H1466L1470 830H1482L1486 821 1490 839H1502L1506 821H1510L1514 802H1526L1530 821 1538 782 1542 802H1554L1558 782 1562 802H1566L1574 839 1578 821H1594L1598 839H1625L1628 830H1677"/>

<!-- translucent tables -->
<rect x="14" y="775" width="323" height="65" fill="#6e6e6e" fill-opacity=".27"/>
<text x="20" y="791" class="w" style="font-size:14px;letter-spacing:.2px" textLength="314" lengthAdjust="spacing">현재 종목: -10.69% / QQQ: +0.15% / QQQE: +2.45%</text>
<text x="176" y="815" text-anchor="middle" style="font-size:14px;fill:#b22fd3;letter-spacing:.2px">티어: D - 추세 이탈주</text>
<text x="291" y="836" text-anchor="end" style="font-size:11px;fill:#555">rp(동일가중 대비): -15.14%</text>
<rect x="1599" y="775" width="110" height="34" fill="#6e6e6e" fill-opacity=".3"/>
<text x="1654" y="800" text-anchor="middle" style="font-size:21px;fill:#8f8f8f;letter-spacing:1px">중립 / 혼조</text>

<!-- TV logo -->
<path d="M16 818H34V833H26V825H16ZM47 818 40 833H33L40 818Z" fill="#000" stroke="#fff" stroke-width="1.500" paint-order="stroke"/><circle cx="37" cy="822" r="3.500" fill="#000" stroke="#fff" stroke-width="1" paint-order="stroke"/>
<text x="53" y="833" textLength="122" lengthAdjust="spacingAndGlyphs" style="font-size:21px;font-weight:700;fill:#000;stroke:#fff;stroke-width:2.500px;paint-order:stroke">TradingView</text>

<!-- price axis -->
<g>
<text class="ax" x="1728" y="64" textLength="29" lengthAdjust="spacingAndGlyphs">66.00</text><text class="ax" x="1728" y="105" textLength="29" lengthAdjust="spacingAndGlyphs">64.00</text><text class="ax" x="1728" y="146" textLength="29" lengthAdjust="spacingAndGlyphs">62.00</text><text class="ax" x="1728" y="188" textLength="29" lengthAdjust="spacingAndGlyphs">60.00</text><text class="ax" x="1728" y="229" textLength="29" lengthAdjust="spacingAndGlyphs">58.00</text><text class="ax" x="1728" y="270" textLength="29" lengthAdjust="spacingAndGlyphs">56.00</text><text class="ax" x="1728" y="311" textLength="29" lengthAdjust="spacingAndGlyphs">54.00</text><text class="ax" x="1728" y="352" textLength="29" lengthAdjust="spacingAndGlyphs">52.00</text><text class="ax" x="1728" y="435" textLength="29" lengthAdjust="spacingAndGlyphs">48.00</text><text class="ax" x="1728" y="476" textLength="29" lengthAdjust="spacingAndGlyphs">46.00</text><text class="ax" x="1728" y="517" textLength="29" lengthAdjust="spacingAndGlyphs">44.00</text><text class="ax" x="1728" y="682" textLength="29" lengthAdjust="spacingAndGlyphs">36.00</text><text class="ax" x="1728" y="723" textLength="29" lengthAdjust="spacingAndGlyphs">34.00</text><text class="ax" x="1728" y="764" textLength="29" lengthAdjust="spacingAndGlyphs">32.00</text><text class="ax" x="1728" y="807" textLength="23" lengthAdjust="spacingAndGlyphs">2.00</text><text class="ax" x="1728" y="845" textLength="35" lengthAdjust="spacingAndGlyphs">0.0000</text>
</g>
<g>
<rect x="1720" y="324" width="43" height="17" fill="#787b86"/><text class="lb w" x="1742.500" y="338" textLength="29" lengthAdjust="spacingAndGlyphs">52.76</text>
<rect x="1720" y="360" width="43" height="17" fill="#2962ff"/><text class="lb w" x="1742.500" y="374" textLength="29" lengthAdjust="spacingAndGlyphs">50.69</text>
<rect x="1720" y="377" width="43" height="17" fill="#ff9800"/><text class="lb" x="1742.500" y="391" textLength="29" lengthAdjust="spacingAndGlyphs">50.18</text>
<rect x="1720" y="408" width="43" height="17" fill="#a52a2a"/><text class="lb w" x="1742.500" y="422" textLength="29" lengthAdjust="spacingAndGlyphs">48.69</text>
<rect x="1720" y="432" width="43" height="17" fill="#089981"/><text class="lb w" x="1742.500" y="446" textLength="29" lengthAdjust="spacingAndGlyphs">47.03</text>
<rect x="1720" y="449" width="43" height="17" fill="#00bcd4"/><text class="lb" x="1742.500" y="463" textLength="29" lengthAdjust="spacingAndGlyphs">46.72</text>
<rect x="1720" y="481" width="43" height="17" fill="#00bcd4"/><text class="lb" x="1742.500" y="495" textLength="29" lengthAdjust="spacingAndGlyphs">45.17</text>
<rect x="1720" y="527" width="43" height="17" fill="#4caf50"/><text class="lb w" x="1742.500" y="541" textLength="29" lengthAdjust="spacingAndGlyphs">42.75</text>
<rect x="1720" y="544" width="43" height="17" fill="#4a0f8f"/><text class="lb w" x="1742.500" y="558" textLength="29" lengthAdjust="spacingAndGlyphs">41.20</text>
<rect x="1720" y="561" width="43" height="17" fill="#c79100"/><text class="lb w" x="1742.500" y="575" textLength="29" lengthAdjust="spacingAndGlyphs">40.17</text>
<rect x="1720" y="578" width="43" height="17" fill="#00e676"/><text class="lb" x="1742.500" y="592" textLength="29" lengthAdjust="spacingAndGlyphs">39.62</text>
<rect x="1720" y="595" width="43" height="17" fill="#089981"/><text class="lb w" x="1742.500" y="609" textLength="29" lengthAdjust="spacingAndGlyphs">39.62</text>
<rect x="1720" y="612" width="43" height="17" fill="#000080"/><text class="lb w" x="1742.500" y="626" textLength="29" lengthAdjust="spacingAndGlyphs">39.14</text>
<rect x="1720" y="629" width="43" height="17" fill="#00bcd4"/><text class="lb" x="1742.500" y="643" textLength="29" lengthAdjust="spacingAndGlyphs">38.78</text>
<rect x="1720" y="646" width="43" height="17" fill="#787b86"/><text class="lb w" x="1742.500" y="660" textLength="29" lengthAdjust="spacingAndGlyphs">37.38</text>
<rect x="1720" y="694" width="43" height="17" fill="#2962ff"/><text class="lb w" x="1742.500" y="708" textLength="29" lengthAdjust="spacingAndGlyphs">34.81</text>
<rect x="1720" y="718" width="57" height="17" fill="#26a69a"/><text class="lb w" x="1750" y="732" textLength="44" lengthAdjust="spacingAndGlyphs">579.73 K</text>
<rect x="1688" y="595" width="31" height="17" rx="1" fill="#089981"/><text class="lb w" x="1703.500" y="609" textLength="23" lengthAdjust="spacingAndGlyphs">NVO</text>
<rect x="1720" y="784" width="37" height="17" rx="2" fill="#363a45"/><text class="lb w" x="1739.500" y="798" textLength="23" lengthAdjust="spacingAndGlyphs">2.50</text>
<rect x="1720" y="822" width="49" height="17" rx="2" fill="#363a45"/><text class="lb w" x="1745.500" y="836" textLength="35" lengthAdjust="spacingAndGlyphs">0.5000</text>
</g>
<rect x="1723.500" y="7.500" width="56" height="24" rx="4" fill="#fff" stroke="#e6e7ea"/>
<text x="1727" y="23" style="font-size:13.500px;letter-spacing:-.3px;fill:#131722">USD</text>
<path d="M1769 18 1771.500 20.500 1774 18" fill="none" stroke="#131722" stroke-width="1.200"/>

<!-- time axis -->
<g>
<text class="tm" x="7" y="865">24</text><text class="tm" x="105.500" y="865">12월</text><text class="tm" x="161.500" y="865">3</text><text class="tm" x="217" y="865">5</text><text class="tm" x="273" y="865">9</text><text class="tm" x="328" y="865">11</text><text class="tm" x="384" y="865">15</text><text class="tm" x="440" y="865">17</text><text class="tm" x="496" y="865">19</text><text class="tm" x="551" y="865">23</text><text class="tm" x="623" y="865">29</text><text class="tm" x="706" y="865" font-weight="700">2026</text><text class="tm" x="762" y="865">6</text><text class="tm" x="818" y="865">8</text><text class="tm" x="874" y="865">12</text><text class="tm" x="930" y="865">14</text><text class="tm" x="985" y="865">16</text><text class="tm" x="1040" y="865">21</text><text class="tm" x="1097" y="865">23</text><text class="tm" x="1152" y="865">27</text><text class="tm" x="1208" y="865">29</text><text class="tm" x="1263" y="865">2월</text><text class="tm" x="1320" y="865">4</text><text class="tm" x="1375" y="865">6</text><text class="tm" x="1431" y="865">10</text><text class="tm" x="1486" y="865">12</text><text class="tm" x="1542" y="865">17</text><text class="tm" x="1598" y="865">19</text><text class="tm" x="1653" y="865">23</text><text class="tm" x="1709" y="865">25</text>
</g>
<path d="M1751 855 1757 858.500V864L1751 867.500 1745 864V858.500Z" transform="rotate(30 1751 861)" fill="none" stroke="#131722" stroke-width="1"/><circle cx="1751" cy="861" r="1.800" fill="none" stroke="#131722"/>

<!-- bottom bar -->
<path d="M0 875.500H1777" stroke="#e6e7ea" stroke-width="1"/>
<rect x="99" y="878" width="25" height="34" rx="5" fill="#e8e8e8"/>
<text class="bt" x="26" y="900">1D</text><text class="bt" x="54" y="900">5D</text><text class="bt" x="83" y="900">1M</text><text class="bt" x="112" y="900">3M</text><text class="bt" x="141" y="900">6M</text><text class="bt" x="174" y="900">YTD</text><text class="bt" x="206" y="900">1Y</text><text class="bt" x="233" y="900">5Y</text><text class="bt" x="266" y="900">전체</text>
<path d="M289.500 884V906" stroke="#e0e3eb"/>
<path d="M311 887H316M307 890V888H311M308 885V889M316 885V889M316 888H321V902H315M307 893H321M307 898V890M303 901H311M308.500 898 311.500 901 308.500 904" fill="none" stroke="#131722" stroke-width="1"/>
<text x="1595" y="900" textLength="97" lengthAdjust="spacingAndGlyphs" style="font-size:13.500px">21:19:38 UTC-5</text>
<text x="1704" y="900" style="font-size:13.500px;letter-spacing:-.3px">RTH</text>
<path d="M1739.500 884V906" stroke="#e0e3eb"/>
<rect x="1745" y="878" width="36" height="34" rx="5" fill="#e8e8e8"/>
<text x="1750" y="900" style="font-size:13.500px;letter-spacing:-.3px">ADJ</text>

<!-- legend -->
<rect x="8.500" y="6.500" width="473" height="25" rx="4" fill="#fff" stroke="#2962ff"/>
<circle cx="22" cy="19" r="9" fill="#0a9bd6"/><path d="M17 16 20 14 23 17 27 18 25 23H24V21H20V23H19Z" fill="#dff4fb"/>
<text x="35" y="25" textLength="385" lengthAdjust="spacingAndGlyphs" style="font-size:16.500px">Novo Nordisk A/S Sponsored ADR Class B · 1시간 · NYSE</text>
<path d="M432 13H444L440 19 444 25H432Z" fill="#c9cacc"/>
<g fill="none" stroke="#333" stroke-width="1"><circle cx="459" cy="19" r="1.800"/><circle cx="466" cy="19" r="1.800"/><circle cx="473" cy="19" r="1.800"/></g>
<g>
<text x="489" y="24" class="g" style="font-size:13.500px;letter-spacing:-.4px">39.48</text>
<text x="526" y="24">고</text><text x="539" y="24" class="g" style="font-size:13.500px;letter-spacing:-.4px">39.78</text>
<text x="575" y="24">저</text><text x="589" y="24" class="g" style="font-size:13.500px;letter-spacing:-.4px">39.42</text>
<text x="628" y="24">종</text><text x="642" y="24" class="g" style="font-size:13.500px;letter-spacing:-.4px">39.62</text>
<text x="678" y="24" class="g" style="font-size:13.500px;letter-spacing:-.6px">+0.14 (+0.35%)</text>
<text x="770" y="24">볼륨</text><text x="797" y="24" style="fill:#26a69a;font-size:13.500px;letter-spacing:-.4px">579.73 K</text>
<text x="852" y="24" class="r" style="font-size:13.500px;letter-spacing:-.6px">-7.79 (-16.43%)</text>
</g>
<rect x="13.500" y="36.500" width="54" height="33" rx="4" fill="#fff" stroke="#f23645"/>
<text x="40.500" y="51" text-anchor="middle" class="r" style="font-size:13.500px">39.63</text>
<text x="40.500" y="65" text-anchor="middle" class="r" style="font-size:11.500px">셀</text>
<text x="85" y="56" text-anchor="middle" style="font-size:11.500px">0.00</text>
<rect x="103.500" y="36.500" width="53" height="33" rx="4" fill="#fff" stroke="#2962ff"/>
<text x="130" y="51" text-anchor="middle" style="font-size:13.500px;fill:#2962ff">39.63</text>
<text x="130" y="65" text-anchor="middle" style="font-size:11.500px;fill:#2962ff">바이</text>
<rect x="13.500" y="77.500" width="31" height="21" rx="3" fill="#fff" stroke="#e0e3eb"/>
<path d="M20 85.500 23.500 89 27 85.500" fill="none" stroke="#131722" stroke-width="1.200"/>
<text x="33" y="93" style="font-size:13px">2</text>

<!-- outer grey frame -->
<rect x="0" y="0" width="1777" height="2" fill="#ebebeb"/><rect x="0" y="0" width="4" height="915" fill="#ebebeb"/><rect x="0" y="913" width="1777" height="2" fill="#ebebeb"/>
</svg>
</body></html>
